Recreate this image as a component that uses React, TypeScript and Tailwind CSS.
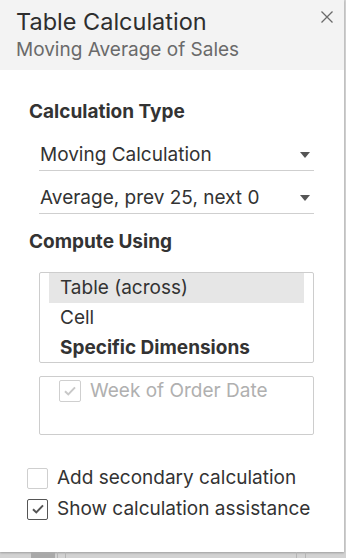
import { type ReactNode } from 'react';

const font = { fontFamily: 'Inter, Roboto, sans-serif' };

function Arrow() {
    return (
        <svg width="10" height="6" viewBox="0 0 10 6" className="mr-[1px]">
            <path d="M0 0 L10 0 L5 6 Z" fill="#555" />
        </svg>
    );
}

function Dropdown({ children }: { children: ReactNode }) {
    return (
        <div className="flex items-center justify-between border-b border-[#cfcfcf] pb-[4px] pl-[1px] pr-[3px]">
            <span className="text-[19px] leading-[22px] text-[#333]">{children}</span>
            <Arrow />
        </div>
    );
}

function Check({ color }: { color: string }) {
    return (
        <svg width="12" height="10" viewBox="0 0 12 10">
            <path d="M1 5.2 L4.3 8.4 L11 1.4" fill="none" stroke={color} strokeWidth="2" />
        </svg>
    );
}

export default function App() {
    return (
        <div className="relative h-[558px] w-[346px] overflow-hidden bg-[#d2d2d2]" style={font}>
            <div className="flex h-[552px] w-[344px] flex-col bg-white shadow-[0_1px_2px_rgba(0,0,0,0.25)]">
                {/* header */}
                <div className="relative h-[70px] shrink-0 bg-[#f3f3f3] pl-[16px] pt-[8px]">
                    <div className="text-[23.5px] leading-[28px] text-[#2e2e2e]">Table Calculation</div>
                    <div className="mt-[3px] text-[19px] leading-[22px] text-[#6a6a6a]">Moving Average of Sales</div>
                    <button className="absolute right-[11px] top-[11px]">
                        <svg width="12" height="12" viewBox="0 0 12 12">
                            <path d="M0.5 0.5 L11.5 11.5 M11.5 0.5 L0.5 11.5" stroke="#6a6a6a" strokeWidth="1.3" />
                        </svg>
                    </button>
                </div>

                <div className="flex flex-col pl-[29px] pr-[30px] pt-[31px]">
                    <div className="text-[19px] font-bold leading-[22px] text-[#333]">Calculation Type</div>

                    <div className="ml-[10px] mt-[21px] flex flex-col gap-[16px]">
                        <Dropdown>Moving Calculation</Dropdown>
                        <Dropdown>Average, prev 25, next 0</Dropdown>
                    </div>

                    <div className="mt-[17px] text-[19px] font-bold leading-[22px] text-[#333]">Compute Using</div>

                    <div className="ml-[10px] mt-[19px] flex h-[91px] flex-col rounded-[2px] border border-[#cdcdcd] px-[9px] text-[19px] text-[#333]">
                        <div className="flex h-[30px] items-center bg-[#e6e6e6] pl-[11px] leading-[22px]">Table (across)</div>
                        <div className="flex h-[30px] items-center pl-[11px] leading-[22px]">Cell</div>
                        <div className="flex h-[29px] items-center pl-[11px] font-bold leading-[22px]">Specific Dimensions</div>
                    </div>

                    <div className="ml-[10px] mt-[13px] h-[59px] rounded-[2px] border border-[#cdcdcd] pl-[19px] pt-[3px]">
                        <div className="flex items-center gap-[9px]">
                            <div className="flex h-[22px] w-[22px] items-center justify-center rounded-[2px] border border-[#cfcfcf]">
                                <Check color="#c8c8c8" />
                            </div>
                            <span className="text-[19px] leading-[22px] text-[#b0b0b0]">Week of Order Date</span>
                        </div>
                    </div>
                </div>

                <div className="mt-[32px] flex flex-col gap-[9px] pl-[27px]">
                    <div className="flex items-center gap-[9px]">
                        <div className="h-[21px] w-[21px] rounded-[2px] border border-[#cfcfcf]" />
                        <span className="text-[19px] leading-[22px] text-[#333]">Add secondary calculation</span>
                    </div>
                    <div className="flex items-center gap-[9px]">
                        <div className="flex h-[21px] w-[21px] items-center justify-center rounded-[2px] border border-[#555]">
                            <Check color="#555" />
                        </div>
                        <span className="text-[19px] leading-[22px] text-[#333]">Show calculation assistance</span>
                    </div>
                </div>
            </div>

            {/* strip of the workspace showing below the panel */}
            <div className="flex h-[6px] w-[344px] items-stretch">
                <div className="w-[31px]" />
                <div className="w-[24px] bg-[#a9a9a9]" />
                <div className="ml-[2px] w-[1px] bg-[#b5b5b5]" />
                <div className="ml-[7px] w-[1px] bg-[#b5b5b5]" />
                <div className="ml-[230px] w-[1px] bg-[#b5b5b5]" />
                <div className="ml-[8px] w-[1px] bg-[#b5b5b5]" />
            </div>
        </div>
    );
}
